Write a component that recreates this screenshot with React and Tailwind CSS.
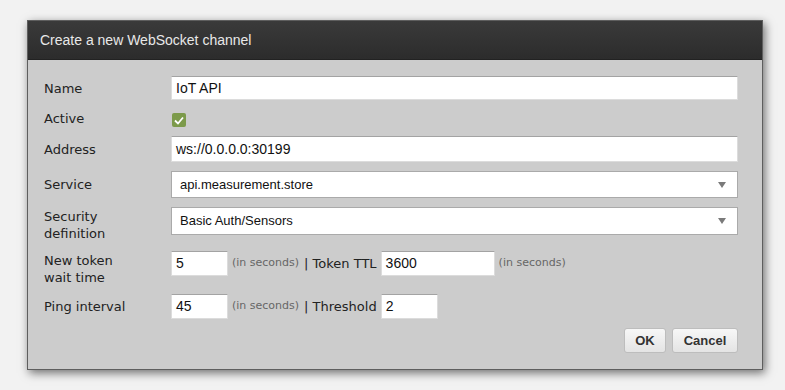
const dejavu = 'font-[family-name:"DejaVu_Sans",sans-serif]';
const arial = 'font-[family-name:"Liberation_Sans",Arial,sans-serif]';

const Label = ({ children }) => (
  <div className={`w-[127px] shrink-0 text-[13px] leading-[17px] text-[#222] ${dejavu}`}>
    {children}
  </div>
);

const TextInput = ({ value, h = 'h-[25px]', className = '' }) => (
  <div
    className={`${h} bg-white border border-[#dcdcdc] border-t-[#a3a3a3] flex items-center px-[4px] text-[14px] text-[#111] ${arial} ${className}`}
  >
    {value}
  </div>
);

const Select = ({ value, h, className = '' }) => (
  <div
    className={`${h} bg-white border border-[#aaaaaa] flex items-center justify-between pl-[8px] pr-[11px] text-[13px] text-[#111] ${arial} ${className}`}
  >
    <span>{value}</span>
    <svg width="8" height="6" viewBox="0 0 8 6">
      <path d="M0 0 L8 0 L4 6 Z" fill="#7a7a7a" />
    </svg>
  </div>
);

const Hint = ({ children }) => (
  <span className={`text-[11px] text-[#666] ${dejavu}`}>{children}</span>
);

const Sep = ({ children }) => (
  <span className={`text-[13px] text-[#222] whitespace-pre ${dejavu}`}>{children}</span>
);

const Button = ({ children, w }) => (
  <button
    className={`${w} h-[25px] rounded-[3px] border border-[#bdbdbd] bg-gradient-to-b from-[#f7f7f7] to-[#e4e4e4] text-[13px] font-bold text-[#333] ${arial}`}
  >
    {children}
  </button>
);

export default function App() {
  return (
    <div className="w-[785px] h-[390px] bg-[#f2f2f2] pt-[20px] pl-[27px] overflow-hidden">
      <div className="w-[736px] h-[350px] border border-[#5e5e5e] bg-[#cccccc] shadow-[2px_3px_9px_rgba(0,0,0,0.55)] flex flex-col">
        <div className={`h-[39px] shrink-0 bg-gradient-to-b from-[#3a3a3a] to-[#2c2c2c] border-b border-[#222] flex items-center pl-[12px] text-[14px] text-[#e8e8e8] ${arial}`}>
          Create a new WebSocket channel
        </div>

        <div className="flex flex-col pl-[16px] pr-[24px]">
          <div className="flex items-center mt-[16px] h-[24px]">
            <Label>Name</Label>
            <TextInput value="IoT API" h="h-[24px]" className="flex-1" />
          </div>

          <div className="flex items-center mt-[13px] h-[14px]">
            <Label>
              <span className="relative -top-[2px]">Active</span>
            </Label>
            <div className="ml-[1px] w-[14px] h-[14px] rounded-[2px] bg-[#7c9a4a] flex items-center justify-center">
              <svg width="10" height="9" viewBox="0 0 10 9">
                <path d="M1 4.5 L4 7.5 L9 1.5" fill="none" stroke="#fff" strokeWidth="1.8" />
              </svg>
            </div>
          </div>

          <div className="flex items-center mt-[9px] h-[26px]">
            <Label>Address</Label>
            <TextInput value="ws://0.0.0.0:30199" h="h-[26px]" className="flex-1" />
          </div>

          <div className="flex items-center mt-[9px] h-[27px]">
            <Label>Service</Label>
            <Select value="api.measurement.store" h="h-[27px]" className="flex-1" />
          </div>

          <div className="flex items-center mt-[9px] h-[28px]">
            <Label>
              <div className="relative top-[4px]">
                Security
                <br />
                definition
              </div>
            </Label>
            <Select value="Basic Auth/Sensors" h="h-[28px]" className="flex-1" />
          </div>

          <div className="flex items-start mt-[16px] h-[25px]">
            <Label>
              <div className="relative top-[1px]">
                New token
                <br />
                wait time
              </div>
            </Label>
            <TextInput value="5" className="w-[57px]" />
            <div className="flex items-center h-[25px] pl-[4px] gap-[5px]">
              <Hint>(in seconds)</Hint>
              <Sep>| Token TTL</Sep>
            </div>
            <TextInput value="3600" className="w-[114px] ml-[4px]" />
            <div className="flex items-center h-[25px] pl-[4px]">
              <Hint>(in seconds)</Hint>
            </div>
          </div>

          <div className="flex items-center mt-[18px] h-[25px]">
            <Label>Ping interval</Label>
            <TextInput value="45" className="w-[57px]" />
            <div className="flex items-center h-[25px] pl-[4px] gap-[5px]">
              <Hint>(in seconds)</Hint>
              <Sep>| Threshold</Sep>
            </div>
            <TextInput value="2" className="w-[57px] ml-[4px]" />
          </div>

          <div className="flex justify-end gap-[6px] mt-[9px]">
            <Button w="w-[42px]">OK</Button>
            <Button w="w-[66px]">Cancel</Button>
          </div>
        </div>
      </div>
    </div>
  );
}
